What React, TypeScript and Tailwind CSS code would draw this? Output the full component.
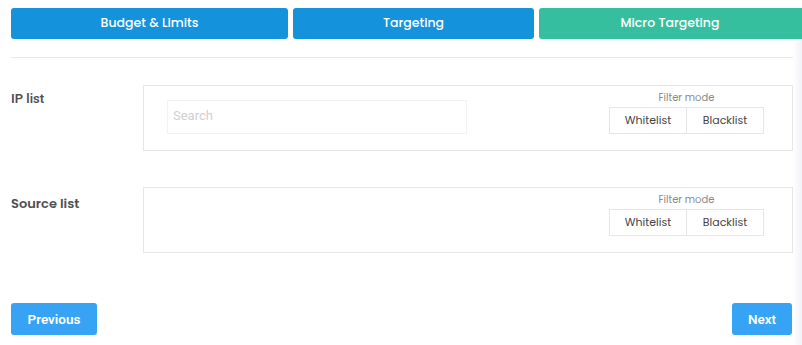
import React from "react";

const font = { fontFamily: "Poppins, Inter, 'Noto Sans', sans-serif" };
const roboto = { fontFamily: "Roboto, 'Liberation Sans', sans-serif" };

function FilterMode() {
  return (
    <div className="flex flex-col items-center">
      <span className="text-[10px] leading-[14px] text-[#8a8a8a]">Filter mode</span>
      <div className="mt-[2px] flex h-[27px] border border-[#e6e6e6]">
        <button className="w-[77px] border-r border-[#e6e6e6] text-[11px] text-[#444]">Whitelist</button>
        <button className="w-[76px] text-[11px] text-[#444]">Blacklist</button>
      </div>
    </div>
  );
}

function Section({ label, search, labelClass, labelStyle }: { label: string; search?: boolean; labelClass?: string; labelStyle?: React.CSSProperties }) {
  return (
    <div className="flex">
      <div className={`w-[132px] text-[13px] font-semibold text-[#505050] ${labelClass ?? ""}`} style={labelStyle}>
        {label}
      </div>
      <div className="flex h-[66px] w-[650px] items-start justify-between border border-[#e6e6e6] pr-[28px] pl-[23px]">
        {search ? (
          <input
            placeholder="Search"
            className="mt-[14px] h-[34px] w-[300px] border border-[#f2f2f2] px-[5px] pb-[3px] text-[13px] outline-none placeholder:text-[#d0d0d0]"
            style={roboto}
          />
        ) : (
          <div />
        )}
        <div className="pt-[5px]">
          <FilterMode />
        </div>
      </div>
    </div>
  );
}

export default function App() {
  return (
    <div className="relative h-[345px] w-[802px] overflow-hidden bg-white" style={font}>
      <div className="absolute top-[40px] right-0 bottom-0 w-[9px] bg-gradient-to-r from-white to-[#f1f2f7]" />
      <div className="flex gap-[5px] pt-[8px] pl-[11px]">
        <div className="flex h-[31px] w-[277px] shrink-0 items-center justify-center rounded-[3px] bg-[#1592dc] text-[12.5px] font-medium text-white">
          Budget &amp; Limits
        </div>
        <div className="flex h-[31px] w-[241px] shrink-0 items-center justify-center rounded-[3px] bg-[#1592dc] text-[12.5px] font-medium text-white">
          Targeting
        </div>
        <div className="flex h-[31px] w-[270px] shrink-0 items-center justify-center rounded-[3px] bg-[#35bf9f] pr-[8px] text-[12.5px] font-medium text-white">
          Micro Targeting
        </div>
      </div>
      <div className="mt-[18px] ml-[11px] h-px w-[782px] bg-[#e8e8e8]" />
      <div className="mt-[27px] flex flex-col gap-[36px] pl-[11px]">
        <Section label="IP list" search labelClass="pt-[4px] font-bold" labelStyle={roboto} />
        <Section label="Source list" labelClass="pt-[7px]" />
      </div>
      <div className="mt-[50px] flex justify-between pr-[10px] pl-[11px]" style={roboto}>
        <button className="h-[32px] w-[86px] rounded-[3px] bg-[#37a3f5] text-[13.5px] font-semibold text-white">
          Previous
        </button>
        <button className="h-[32px] w-[60px] rounded-[3px] bg-[#37a3f5] text-[13.5px] font-semibold text-white">
          Next
        </button>
      </div>
    </div>
  );
}
